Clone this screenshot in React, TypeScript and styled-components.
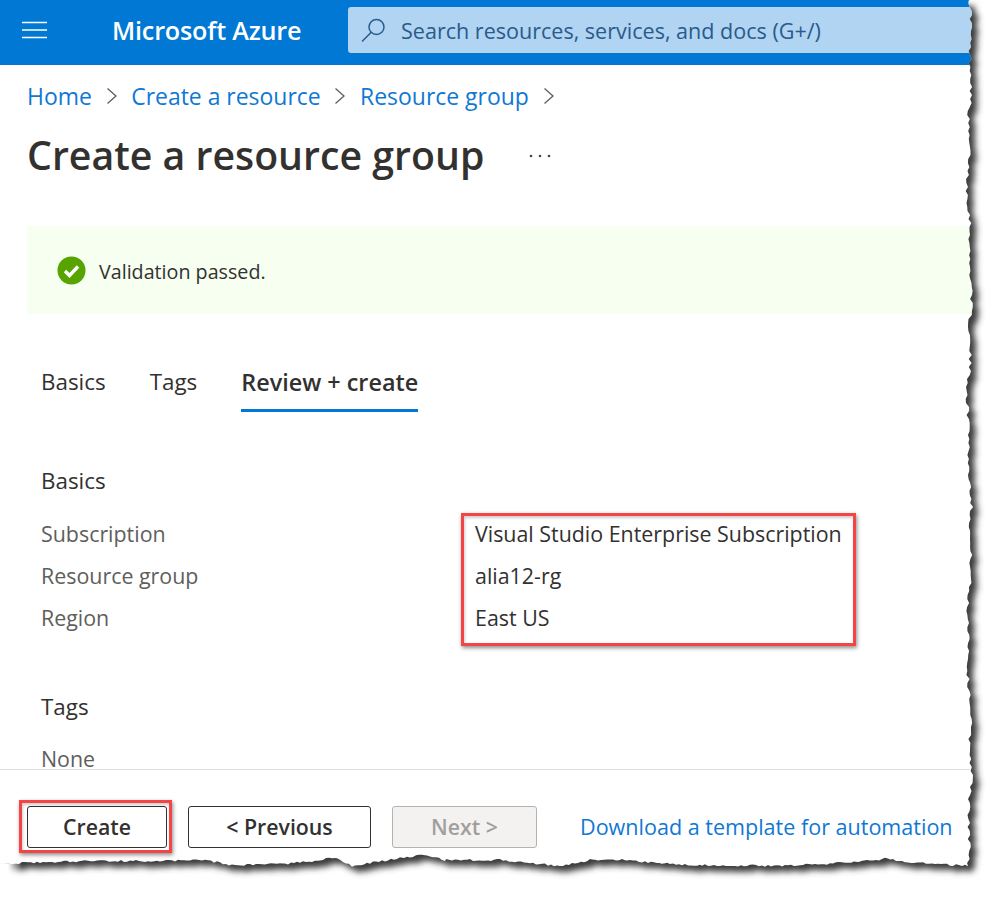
import React, { useMemo } from "react";
import styled, { createGlobalStyle } from "styled-components";

const Global = createGlobalStyle`
  html, body { margin: 0; padding: 0; background: #fff; }
  body { font-family: "Open Sans", "Noto Sans", "Liberation Sans", sans-serif; }
  #root { width: 993px; height: 910px; }
`;

const Canvas = styled.div`
  position: relative;
  width: 993px;
  height: 910px;
  overflow: hidden;
  background: #fff;
`;
const Paper = styled.div`
  display: flex;
  flex-direction: column;
  width: 993px;
  height: 910px;
`;
const TopBar = styled.header`
  display: flex;
  align-items: center;
  flex: none;
  height: 65px;
  padding: 0 0 5px 22px;
  background: #0078d4;
  box-sizing: border-box;
`;
const MenuButton = styled.svg`
  flex: none;
  width: 25px;
  height: 18px;
`;
const Brand = styled.div`
  flex: none;
  width: 236px;
  margin-left: 65px;
  color: #fff;
  font-size: 25.2px;
  font-weight: 600;
  letter-spacing: -0.2px;
`;
const SearchBox = styled.div`
  display: flex;
  align-items: center;
  flex: 1;
  height: 46px;
  padding-left: 13px;
  border-radius: 3px 0 0 3px;
  background: #b0d4f1;
  color: #2a5a8c;
  font-size: 21.55px;
`;
const SearchGlyph = styled.svg`
  flex: none;
  width: 25px;
  height: 25px;
  margin-right: 15px;
`;
const Main = styled.main`
  flex: none;
  height: 704px;
  overflow: hidden;
  padding-left: 27px;
  box-sizing: border-box;
`;
const Crumbs = styled.nav`
  display: flex;
  align-items: center;
  height: 32px;
  margin-top: 15px;
  color: #0f78d4;
  font-size: 22.95px;
`;
const Chevron = styled.svg`
  flex: none;
  width: 12px;
  height: 18px;
  margin: 0 13.7px;
`;
const TitleRow = styled.div`
  display: flex;
  align-items: center;
  height: 62px;
  margin-top: 11px;
`;
const Title = styled.h1`
  margin: 0;
  color: #323130;
  font-size: 39.25px;
  font-weight: 600;
`;
const More = styled.svg`
  flex: none;
  width: 22px;
  height: 4px;
  margin: 3px 0 0 45px;
`;
const Banner = styled.div`
  display: flex;
  align-items: center;
  gap: 13px;
  height: 88px;
  margin-top: 41px;
  padding-left: 30px;
  background: #f6fff0;
  color: #323130;
  font-size: 19.7px;
`;
const BannerText = styled.span`
  padding-top: 2px;
`;
const StatusIcon = styled.svg`
  flex: none;
  width: 29px;
  height: 29px;
`;
const Tabs = styled.div`
  display: flex;
  gap: 44px;
  height: 56px;
  margin-top: 42px;
  padding-left: 14px;
`;
const Tab = styled.div<{ $active?: boolean }>`
  height: 56px;
  box-sizing: border-box;
  padding-top: 10px;
  color: #323130;
  font-size: ${(p) => (p.$active ? 23.4 : 22.4)}px;
  font-weight: ${(p) => (p.$active ? 600 : 400)};
  border-bottom: 3px solid ${(p) => (p.$active ? "#0078d4" : "transparent")};
`;
const Section = styled.section`
  padding-left: 14px;
`;
const SectionTitle = styled.h2<{ $top: number }>`
  margin: ${(p) => p.$top}px 0 0;
  color: #323130;
  font-size: 22.4px;
  font-weight: 400;
  line-height: 32px;
`;
const Summary = styled.div`
  display: grid;
  grid-template-columns: 434px 1fr;
  margin-top: 16px;
`;
const Labels = styled.div`
  display: flex;
  flex-direction: column;
`;
const Label = styled.div`
  height: 42px;
  line-height: 42px;
  color: #605e5c;
  font-size: 21.4px;
`;
const Values = styled.div`
  position: relative;
  display: flex;
  flex-direction: column;
`;
const Value = styled.div`
  height: 42px;
  line-height: 42px;
  color: #323130;
  font-size: 21.4px;
`;
const Highlight = styled.div`
  position: absolute;
  box-sizing: border-box;
  border: 3px solid #f44444;
  box-shadow: 1px 2px 4px rgba(0, 0, 0, 0.45), inset 1px 2px 3px rgba(0, 0, 0, 0.2);
  pointer-events: none;
`;
const ValuesHighlight = styled(Highlight)`
  left: -14px;
  top: 0;
  width: 395px;
  height: 133px;
`;
const NoneLabel = styled(Label)`
  margin-top: 15px;
`;
const Footer = styled.footer`
  display: flex;
  align-items: flex-start;
  flex: none;
  height: 79px;
  margin-right: 23px;
  padding: 36px 0 0 27px;
  border-top: 1px solid #dedede;
  box-sizing: border-box;
`;
const CreateWrap = styled.div`
  position: relative;
  flex: none;
`;
const Action = styled.button<{ $w: number; $disabled?: boolean }>`
  display: block;
  width: ${(p) => p.$w}px;
  height: 42px;
  padding: 0 0 1px;
  box-sizing: border-box;
  border: 1px solid ${(p) => (p.$disabled ? "#b5b3b1" : "#323130")};
  border-radius: 3px;
  background: ${(p) => (p.$disabled ? "#f3f2f1" : "#fff")};
  color: ${(p) => (p.$disabled ? "#a19f9d" : "#323130")};
  font-family: inherit;
  font-size: 21.3px;
  font-weight: 600;
`;
const CreateHighlight = styled(Highlight)`
  left: -8px;
  top: -6px;
  width: 153px;
  height: 53px;
`;
const PrevAction = styled(Action)`
  margin-left: 21px;
`;
const NextAction = styled(Action)`
  margin-left: 21px;
`;
const FooterLink = styled.a`
  margin: 6px 0 0 43px;
  color: #0f78d4;
  font-size: 21.55px;
  white-space: nowrap;
`;
const TornEdge = styled.svg`
  position: absolute;
  left: 0;
  top: 0;
  width: 993px;
  height: 910px;
  pointer-events: none;
`;

const bottomAnchors: [number, number][] = [
  [0, 864], [40, 862], [100, 861], [160, 861], [205, 860], [232, 865], [280, 864], [318, 861],
  [335, 857], [352, 866], [400, 858], [425, 855], [445, 860], [500, 860], [560, 866], [590, 860],
  [625, 860], [660, 863], [700, 865], [780, 866], [860, 862], [888, 858], [905, 862], [968, 866],
];

function useTornPath() {
  return useMemo(() => {
    let seed = 17;
    const rnd = () => {
      seed = (seed * 16807) % 2147483647;
      return seed / 2147483647;
    };
    const pts: string[] = ["0,0", "969,0"];
    for (let y = 3; y < 866; y += 4) {
      const wave = 1.4 * Math.sin(y / 37) + Math.sin(y / 11);
      pts.push(`${(969.5 + wave + (rnd() - 0.5) * 3.4).toFixed(1)},${y}`);
    }
    for (let i = bottomAnchors.length - 1; i > 0; i--) {
      const [x1, y1] = bottomAnchors[i];
      const [x0, y0] = bottomAnchors[i - 1];
      for (let x = x1; x > x0; x -= 3) {
        const t = (x - x0) / (x1 - x0);
        pts.push(`${x},${(y0 + (y1 - y0) * t + (rnd() - 0.5) * 2.2).toFixed(1)}`);
      }
    }
    pts.push("0,864");
    return `M${pts.join(" L")} Z`;
  }, []);
}

export default function App() {
  const paper = useTornPath();
  return (
    <>
      <Global />
      <Canvas>
        <Paper>
          <TopBar>
            <MenuButton viewBox="0 0 25 18">
              <path d="M0 1.5h25M0 9h25M0 16.5h25" stroke="#fff" strokeWidth="1.4" />
            </MenuButton>
            <Brand>Microsoft Azure</Brand>
            <SearchBox>
              <SearchGlyph viewBox="0 0 25 25" fill="none" stroke="#2a5a8c" strokeWidth="1.5">
                <circle cx="15.5" cy="9" r="7.5" />
                <path d="M10 14.5L1.5 23" strokeLinecap="round" />
              </SearchGlyph>
              Search resources, services, and docs (G+/)
            </SearchBox>
          </TopBar>
          <Main>
            <Crumbs>
              Home
              <Chevron viewBox="0 0 12 18" fill="none" stroke="#605e5c" strokeWidth="1.3">
                <path d="M1.5 1.5L10 9l-8.5 7.5" />
              </Chevron>
              Create a resource
              <Chevron viewBox="0 0 12 18" fill="none" stroke="#605e5c" strokeWidth="1.3">
                <path d="M1.5 1.5L10 9l-8.5 7.5" />
              </Chevron>
              Resource group
              <Chevron viewBox="0 0 12 18" fill="none" stroke="#605e5c" strokeWidth="1.3">
                <path d="M1.5 1.5L10 9l-8.5 7.5" />
              </Chevron>
            </Crumbs>
            <TitleRow>
              <Title>Create a resource group</Title>
              <More viewBox="0 0 22 4" fill="#484644">
                <circle cx="2" cy="2" r="1.3" />
                <circle cx="11" cy="2" r="1.3" />
                <circle cx="20" cy="2" r="1.3" />
              </More>
            </TitleRow>
            <Banner>
              <StatusIcon viewBox="0 0 29 29">
                <circle cx="14.5" cy="14.5" r="14" fill="#57a300" />
                <path d="M8 15l4.5 4.5L21 10.5" fill="none" stroke="#fff" strokeWidth="3.4" />
              </StatusIcon>
              <BannerText>Validation passed.</BannerText>
            </Banner>
            <Tabs>
              <Tab>Basics</Tab>
              <Tab>Tags</Tab>
              <Tab $active>Review + create</Tab>
            </Tabs>
            <Section>
              <SectionTitle $top={53}>Basics</SectionTitle>
              <Summary>
                <Labels>
                  <Label>Subscription</Label>
                  <Label>Resource group</Label>
                  <Label>Region</Label>
                </Labels>
                <Values>
                  <Value>Visual Studio Enterprise Subscription</Value>
                  <Value>alia12-rg</Value>
                  <Value>East US</Value>
                  <ValuesHighlight />
                </Values>
              </Summary>
              <SectionTitle $top={52}>Tags</SectionTitle>
              <NoneLabel>None</NoneLabel>
            </Section>
          </Main>
          <Footer>
            <CreateWrap>
              <Action $w={140}>Create</Action>
              <CreateHighlight />
            </CreateWrap>
            <PrevAction $w={183}>&lt; Previous</PrevAction>
            <NextAction $w={145} $disabled>Next &gt;</NextAction>
            <FooterLink>Download a template for automation</FooterLink>
          </Footer>
        </Paper>
        <TornEdge viewBox="0 0 993 910">
          <defs>
            <filter id="shadowBlur" x="-5%" y="-5%" width="110%" height="110%">
              <feGaussianBlur stdDeviation="3" />
            </filter>
            <clipPath id="outside">
              <path clipRule="evenodd" d={`M0 0H993V910H0Z ${paper}`} />
            </clipPath>
            <linearGradient id="fadeLeft" x1="0" x2="1" y1="0" y2="0">
              <stop offset="0.35" stopColor="#fff" />
              <stop offset="1" stopColor="#fff" stopOpacity="0" />
            </linearGradient>
          </defs>
          <path fillRule="evenodd" fill="#fff" d={`M0 0H993V910H0Z ${paper}`} />
          <g clipPath="url(#outside)">
            <path d={paper} fill="#3a3a3a" filter="url(#shadowBlur)" transform="translate(6 6)" />
            <rect x="0" y="855" width="22" height="30" fill="url(#fadeLeft)" />
          </g>
        </TornEdge>
      </Canvas>
    </>
  );
}
